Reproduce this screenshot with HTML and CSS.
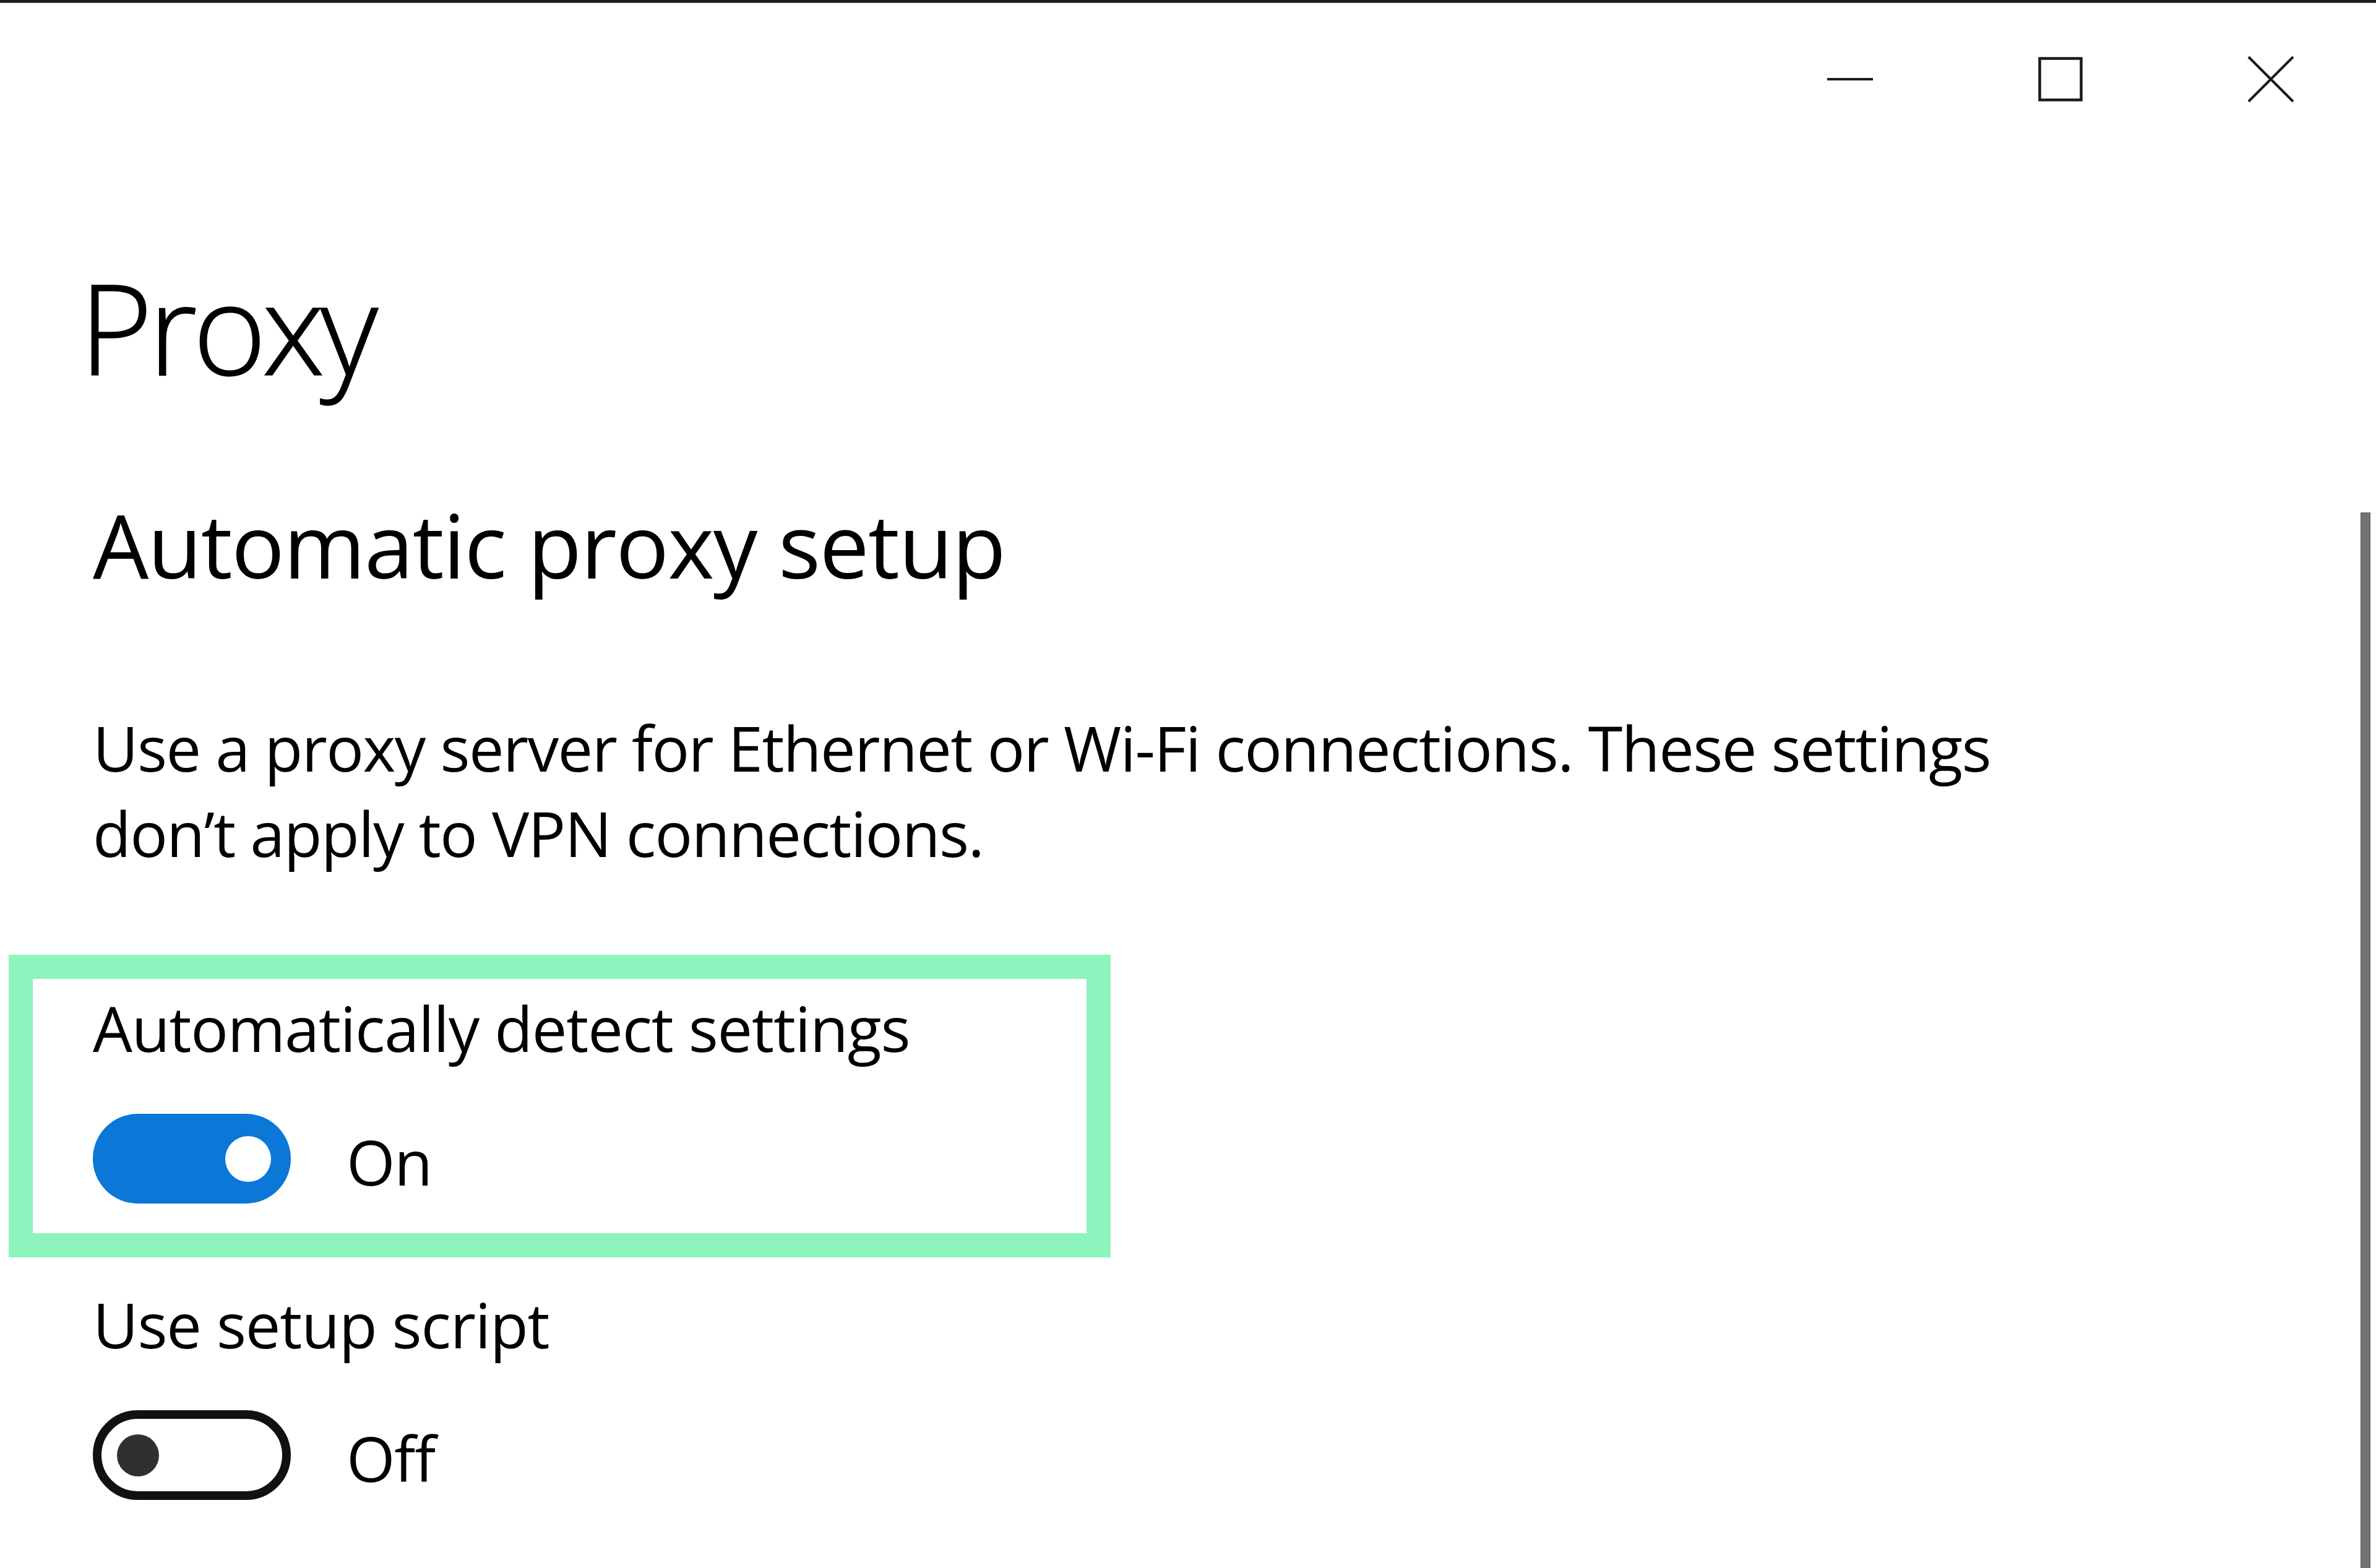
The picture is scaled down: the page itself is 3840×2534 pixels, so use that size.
FILE: index.html
```html
<!DOCTYPE html>
<html lang="en">
<head>
<meta charset="utf-8">
<title>Proxy</title>
<link rel="stylesheet" href="styles.css">
</head>
<body>
<div class="window">
  <header class="titlebar">
    <div class="tb-btn" aria-label="Minimize">
      <svg class="ic-min" width="74" height="4" viewBox="0 0 74 4"><rect x="0" y="0" width="74" height="4" fill="#1a1a1a"/></svg>
    </div>
    <div class="tb-btn" aria-label="Maximize">
      <svg width="72" height="72" viewBox="0 0 72 72"><rect x="2.5" y="2.5" width="67" height="67" fill="none" stroke="#1a1a1a" stroke-width="4.5"/></svg>
    </div>
    <div class="tb-btn" aria-label="Close">
      <svg width="76" height="76" viewBox="0 0 76 76"><path d="M2 2 L74 74 M74 2 L2 74" stroke="#1a1a1a" stroke-width="4" fill="none"/></svg>
    </div>
  </header>
  <div class="window-body">
    <main class="content">
      <h1 class="page-title">Proxy</h1>
      <h2 class="section-title">Automatic proxy setup</h2>
      <p class="desc">Use a proxy server for Ethernet or Wi-Fi connections. These settings don’t apply to VPN connections.</p>
      <section class="setting highlight">
        <div class="setting-label">Automatically detect settings</div>
        <div class="toggle-row">
          <div class="toggle toggle-on"><span class="knob"></span></div>
          <span class="toggle-state">On</span>
        </div>
      </section>
      <section class="setting">
        <div class="setting-label">Use setup script</div>
        <div class="toggle-row">
          <div class="toggle toggle-off"><span class="knob"></span></div>
          <span class="toggle-state">Off</span>
        </div>
      </section>
    </main>
    <div class="scrollbar"><div class="thumb"></div></div>
  </div>
</div>
</body>
</html>
```
FILE: styles.css
```css
html, body {
  margin: 0;
  padding: 0;
  background: #ffffff;
}
body {
  width: 3840px;
  height: 2534px;
  overflow: hidden;
  font-family: "Open Sans", "Noto Sans", "DejaVu Sans", sans-serif;
  color: #000;
}
.window {
  display: flex;
  flex-direction: column;
  height: 2534px;
}
.titlebar {
  height: 248px;
  border-top: 4px solid #1c1c1c;
  box-shadow: inset 0 1px 0 #777;
  display: flex;
  justify-content: flex-end;
  align-items: center;
  flex: none;
}
.tb-btn {
  width: 340px;
  height: 100%;
  display: flex;
  align-items: center;
  justify-content: center;
}
.tb-btn svg { display: block; }
.window-body {
  flex: 1;
  display: flex;
  min-height: 0;
}
.content {
  flex: 1;
  padding-left: 150px;
}
.page-title {
  margin: 145px 0 0 -22px;
  font-size: 203px;
  line-height: 260px;
  font-weight: 300;
  letter-spacing: -7px;
  -webkit-text-stroke: 1.5px #000;
}
.section-title {
  margin: 130px 0 0 0;
  font-size: 143px;
  line-height: 186px;
  font-weight: 400;
  letter-spacing: -1.7px;
}
.desc {
  margin: 166px 0 0 0;
  font-size: 101px;
  line-height: 138px;
  letter-spacing: -1.6px;
  width: 3200px;
}
.setting {
  font-size: 101px;
  line-height: 138px;
  letter-spacing: -1.2px;
}
.highlight {
  margin: 128px 0 0 -136px;
  width: 1781px;
  box-sizing: border-box;
  border: 39px solid #8cf4bc;
  padding: 10px 0 47px 97px;
}
.highlight + .setting {
  margin-top: 39px;
}
.toggle-row {
  display: flex;
  align-items: flex-start;
  margin-top: 70px;
}
.toggle {
  width: 320px;
  height: 145px;
  box-sizing: border-box;
  border-radius: 73px;
  display: flex;
  align-items: center;
  flex: none;
}
.toggle-on {
  background: #0b77d7;
  justify-content: flex-end;
  padding-right: 32px;
}
.toggle-on .knob {
  width: 74px;
  height: 74px;
  border-radius: 50%;
  background: #fff;
}
.toggle-off {
  border: 14px solid #111;
  padding-left: 25px;
}
.toggle-off .knob {
  width: 68px;
  height: 68px;
  border-radius: 50%;
  background: #303030;
}
.toggle-state {
  margin-left: 90px;
  padding-top: 8px;
}
.scrollbar {
  width: 16px;
  flex: none;
  padding-right: 9px;
}
.thumb {
  margin-top: 576px;
  width: 16px;
  height: 1706px;
  background: #727272;
  border-left: 1px solid #5a5a5a;
  border-right: 1px solid #5a5a5a;
  box-sizing: border-box;
}
```
